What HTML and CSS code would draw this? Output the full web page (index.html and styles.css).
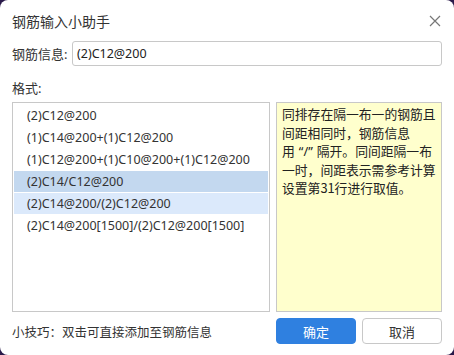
FILE: index.html
```html
<!DOCTYPE html>
<html lang="zh-CN">
<head>
    <meta charset="UTF-8">
    <title>钢筋输入小助手</title>
    <link rel="stylesheet" href="styles.css">
</head>
<body>
    <div class="dialog">
        <div class="title-bar">
            <span class="title">钢筋输入小助手</span>
            <svg class="close" width="12" height="12" viewBox="0 0 12 12">
                <path d="M1 1 L11 11 M11 1 L1 11" stroke="#777" stroke-width="1.2" fill="none"/>
            </svg>
        </div>

        <div class="info-row">
            <label>钢筋信息:</label>
            <div class="input">(2)C12@200</div>
        </div>

        <div class="format-label">格式:</div>

        <div class="panels">
            <ul class="list">
                <li>(2)C12@200</li>
                <li>(1)C14@200+(1)C12@200</li>
                <li>(1)C12@200+(1)C10@200+(1)C12@200</li>
                <li class="selected">(2)C14/C12@200</li>
                <li class="hover">(2)C14@200/(2)C12@200</li>
                <li>(2)C14@200[1500]/(2)C12@200[1500]</li>
            </ul>
            <div class="note">同排存在隔一布一的钢筋且间距相同时，钢筋信息<span class="keep">用<span class="quote">“/”</span></span>隔开。同间距隔一布一时，间距表示需参考计算设置第31行进行取值。</div>
        </div>

        <div class="footer">
            <span class="tip">小技巧：双击可直接添加至钢筋信息</span>
            <div class="buttons">
                <button class="btn btn-primary">确定</button>
                <button class="btn">取消</button>
            </div>
        </div>
    </div>
</body>
</html>
```

FILE: styles.css
```css
* {
    margin: 0;
    padding: 0;
    box-sizing: border-box;
}

body {
    width: 454px;
    height: 355px;
    background: #2a1a4a;
    font-family: "Noto Sans", "Noto Sans CJK SC", sans-serif;
    font-size: 12px;
    color: #333;
    overflow: hidden;
}

.dialog {
    width: 454px;
    height: 355px;
    background: #fff;
    border-radius: 8px;
    padding: 0 12px;
    display: flex;
    flex-direction: column;
}

.title-bar {
    height: 41px;
    display: flex;
    align-items: center;
    justify-content: space-between;
    padding-top: 1px;
}

.title {
    font-size: 14px;
    color: #333;
}

.close {
    margin-right: 1px;
}

.info-row {
    display: flex;
    align-items: center;
    height: 25px;
}

.info-row label {
    width: 60px;
    font-size: 13px;
}

.input {
    flex: 1;
    height: 25px;
    border: 1px solid #c8c8c8;
    border-radius: 3px;
    padding: 0 4px;
    line-height: 23px;
    font-size: 12.5px;
    color: #222;
}

.format-label {
    margin-top: 11px;
    height: 25px;
    line-height: 22px;
    font-size: 13px;
}

.panels {
    display: flex;
    gap: 6px;
    height: 210px;
}

.list {
    list-style: none;
    width: 258px;
    border: 1px solid #c8c8c8;
    padding: 2px 1px;
}

.list li {
    height: 21px;
    line-height: 21px;
    margin-bottom: 1px;
    padding-left: 13px;
    font-size: 12.5px;
    color: #333;
}

.list li.selected {
    background: #c3d8ef;
}

.list li.hover {
    background: #dbe9fb;
}

.note {
    flex: 1;
    background: #ffffcd;
    border: 1px solid #c8c8c8;
    padding: 2px 2px 2px 5px;
    font-family: "Noto Sans CJK SC", sans-serif;
    font-size: 12.8px;
    line-height: 18.5px;
    color: #222;
}

.note .keep {
    white-space: nowrap;
}

.note .quote {
    font-family: "Noto Sans", sans-serif;
    margin: 0 4px;
}

.footer {
    display: flex;
    align-items: center;
    justify-content: space-between;
    margin-top: 6px;
    height: 26px;
}

.tip {
    font-size: 12.5px;
}

.buttons {
    display: flex;
    gap: 6px;
}

.btn {
    width: 80px;
    height: 26px;
    border: 1px solid #c8c8c8;
    border-radius: 4px;
    background: #fff;
    font-family: inherit;
    font-size: 13px;
    color: #333;
}

.btn-primary {
    background: #2f80e0;
    border-color: #2f80e0;
    color: #fff;
}
```
